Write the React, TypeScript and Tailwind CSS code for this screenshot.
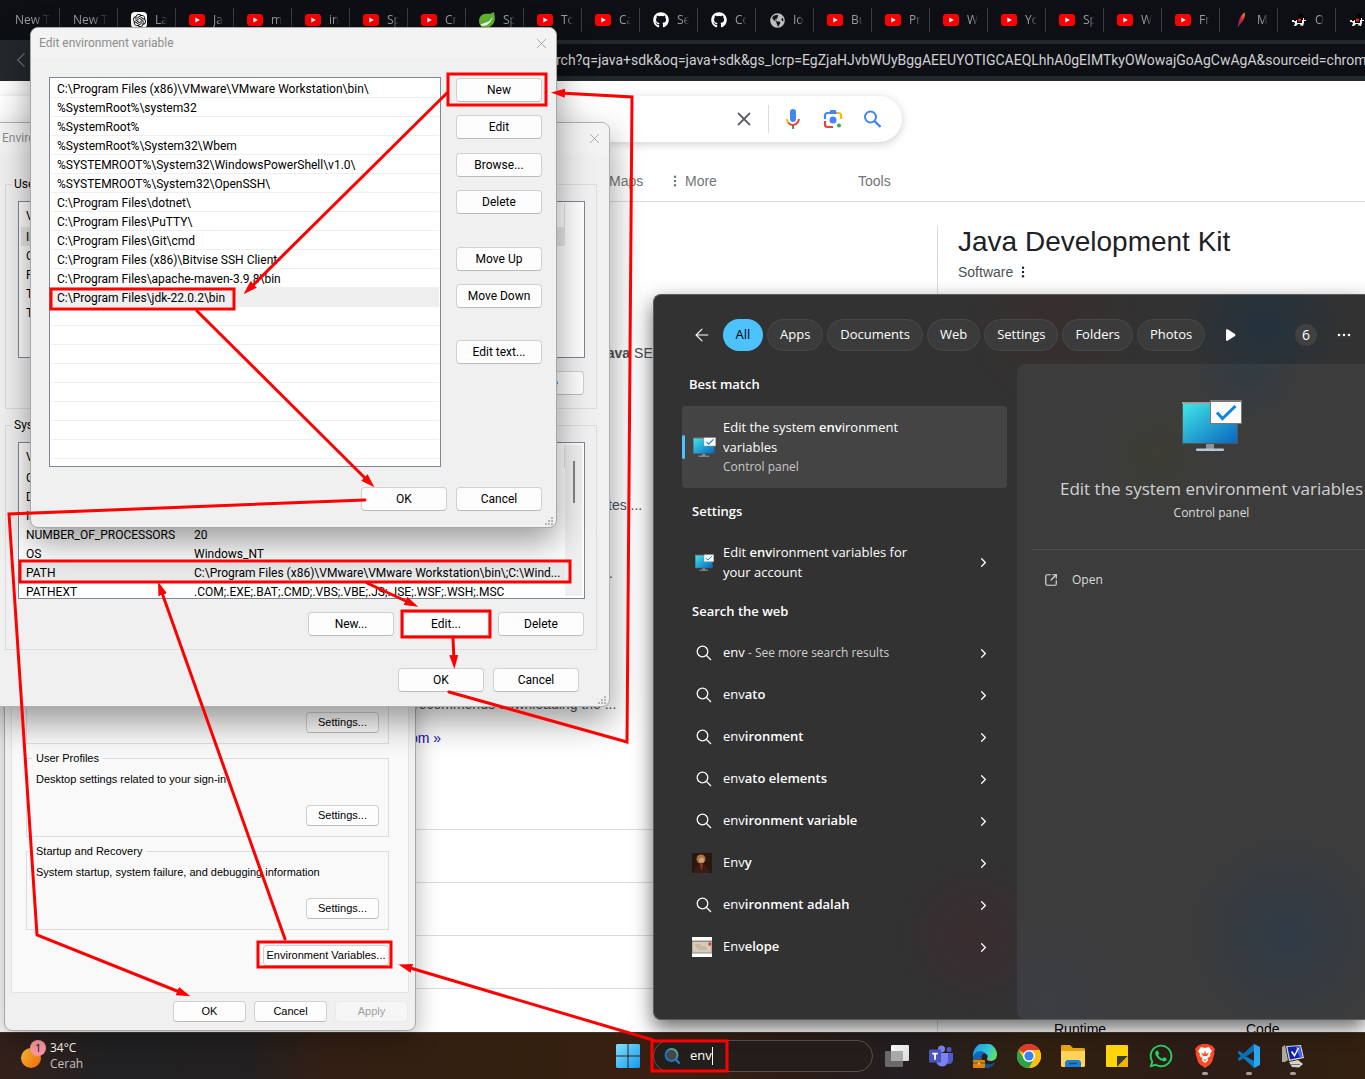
import type { ReactNode } from "react";
import { ChevronLeft, ChevronRight, X, ArrowLeft, SquareArrowOutUpRight } from "lucide-react";
import { FaGithub, FaWhatsapp, FaGlobeAmericas } from "react-icons/fa";
import { SiOpenai } from "react-icons/si";

/* ---------- icons ---------- */

function YouTubeIcon() {
  return (
    <svg viewBox="0 0 16 16" className="size-4">
      <rect x="0" y="2" width="16" height="12" rx="3" fill="#f00" />
      <path d="M6.3 5.4v5.2L10.8 8z" fill="#fff" />
    </svg>
  );
}

function SpringIcon() {
  return (
    <svg viewBox="0 0 16 16" className="size-4">
      <path d="M14.800 0c1 3.200 2 8-.6 11.700C11.500 15.800 6 17 2.200 14.500 0 12.500-.5 9 .5 6 1.700 2.800 4.800 1.500 8.400 1.700c2.900.2 5-.3 6.400-1.700z" fill="#5fb832" />
      <path d="M2.300 13.800c6 .6 10-3 11.400-9.500-2 4.500-4.500 6-10.700 7.500-1.500.5-1.500 1.800-.7 2z" fill="#fff" />
    </svg>
  );
}

function FeatherIcon() {
  return (
    <svg viewBox="0 0 16 16" className="size-4">
      <defs>
        <linearGradient id="feather" x1="0" y1="1" x2="1" y2="0">
          <stop offset="0" stopColor="#6d2a8c" />
          <stop offset=".5" stopColor="#d0203c" />
          <stop offset="1" stopColor="#f79a23" />
        </linearGradient>
      </defs>
      <path d="M4.600 14.800 5.500 11C6.500 6 8.500 2 11.800.4c.6 3.600-.9 8.200-5 12l-1.600 2.800z" fill="url(#feather)" />
    </svg>
  );
}

function DukeIcon() {
  return (
    <svg viewBox="0 0 16 16" className="size-4">
      <path d="M10 1 6 6l-4 2 1 2 7 1 3-3-1-5z" fill="#000" />
      <path d="M1 8h2v1h2V8h1v3h5V8h1V6h1v2h2v1h-2v2l-1 3h-2l-1-2H7l-2 2H3l1-3-1-1H1z" fill="#eee" />
      <circle cx="8.500" cy="8" r="1.800" fill="#e8251f" />
      <path d="M9 13h2v1H9z" fill="#27a84c" />
    </svg>
  );
}

function MonitorIcon({ className, id }: { className: string; id: string }) {
  return (
    <svg viewBox="0 0 60 52" className={className}>
      <defs>
        <linearGradient id={id} x1="0" y1="0" x2="1" y2="1">
          <stop offset="0" stopColor="#40e8e8" />
          <stop offset="1" stopColor="#0a63be" />
        </linearGradient>
      </defs>
      <rect x=".5" y="3.500" width="55" height="40" fill={`url(#${id})`} stroke="#555" />
      <path d="M0 3h56" stroke="#bbb" strokeWidth="1.500" />
      <path d="M24 44h8v5h-8z" fill="#8b929c" />
      <rect x="14" y="48.500" width="28" height="2.500" rx="1" fill="#bac7d2" />
      <rect x="28.500" y=".5" width="31" height="23" fill="#fafafa" stroke="#7a7775" />
      <path d="M28 1h32" stroke="#7a7775" strokeWidth="2" />
      <path d="m35 12.500 5.500 6L53.500 6" fill="none" stroke="#0f84dc" strokeWidth="3" />
    </svg>
  );
}

function MicIcon() {
  return (
    <svg viewBox="0 0 24 24" className="size-6">
      <rect x="9" y="2" width="6" height="13" rx="3" fill="#4285f4" />
      <path d="M11 18h2v4h-2z" fill="#34a853" />
      <path d="M6 12c0 1.700.6 3.200 1.700 4.300" fill="none" stroke="#fbbc04" strokeWidth="2" />
      <path d="M7.400 15.900C10 19 16.500 19 18 12" fill="none" stroke="#ea4335" strokeWidth="2" />
    </svg>
  );
}

function LensIcon() {
  return (
    <svg viewBox="0 0 24 24" className="size-6">
      <path d="M4 12V8.500A2.500 2.500 0 0 1 6.500 6h11" fill="none" stroke="#4285f4" strokeWidth="2.200" />
      <path d="M8 6l1.500-3h5L16 6z" fill="#4285f4" />
      <path d="M15.500 6h2A2.500 2.500 0 0 1 20 8.500V12" fill="none" stroke="#fbbc04" strokeWidth="2.200" />
      <path d="M4 14v3.500A2.500 2.500 0 0 0 6.500 20H12" fill="none" stroke="#ea4335" strokeWidth="2.200" />
      <circle cx="12" cy="13" r="3.500" fill="#4285f4" />
      <circle cx="18" cy="18.500" r="2" fill="#34a853" />
    </svg>
  );
}

function WindowsLogo() {
  return (
    <svg viewBox="0 0 24 24" className="size-6">
      <defs>
        <linearGradient id="win" x1="0" y1="0" x2="1" y2="1">
          <stop offset="0" stopColor="#7ee1ff" />
          <stop offset="1" stopColor="#1498f0" />
        </linearGradient>
      </defs>
      <path d="M1 0h10.500v11.500H0V1zM12.500 0H23l1 1v10.500H12.500zM0 12.500h11.500V24H1l-1-1zM12.500 12.500H24V23l-1 1H12.500z" fill="url(#win)" />
    </svg>
  );
}

function TaskViewIcon() {
  return (
    <svg viewBox="0 0 24 24" className="size-6">
      <defs>
        <linearGradient id="tv" x1="0" y1="0" x2="1" y2="1">
          <stop offset="0" stopColor="#fff" />
          <stop offset="1" stopColor="#d8d8d8" />
        </linearGradient>
      </defs>
      <rect x="6" y="1" width="18" height="16" rx="1" fill="url(#tv)" />
      <rect x="0" y="7" width="18" height="16" rx="1" fill="#696969" />
      <rect x="6" y="7" width="12" height="10" fill="#a9a9a9" />
    </svg>
  );
}

function TeamsIcon() {
  return (
    <svg viewBox="0 0 24 24" className="size-6">
      <circle cx="12.500" cy="5" r="3.500" fill="#7b83eb" />
      <circle cx="20" cy="5.500" r="2.500" fill="#5059c9" />
      <path d="M16 9h8v7a4 4 0 0 1-6 3.500z" fill="#5059c9" />
      <path d="M7 9h12v7a6 6 0 0 1-12 1z" fill="#7b83eb" />
      <rect x="0" y="5.500" width="12" height="13" rx="1" fill="#4b53bc" />
      <path d="M3.200 8.800h5.600v1.600H6.900v5.400H5.100v-5.400H3.200z" fill="#fff" />
    </svg>
  );
}

function EdgeIcon() {
  return (
    <svg viewBox="0 0 24 24" className="size-6">
      <defs>
        <linearGradient id="edge" x1="0" y1=".3" x2="1" y2=".6">
          <stop offset="0" stopColor="#1f9be8" />
          <stop offset=".6" stopColor="#35c6dc" />
          <stop offset="1" stopColor="#64e05c" />
        </linearGradient>
      </defs>
      <path d="M0 12a12 12 0 0 1 24-2c0 5-3 7-6.500 7-3 0-4.500-1.500-3-3.500C16 9 8 7 5 12z" fill="url(#edge)" />
      <path d="M0 13C1 7 9 6 12 9c-4 1-5 6-2 9s8 4 12 0C18 28-1 26 0 13z" fill="#0c68c0" />
      <path d="M10 11c-2.500 3-.5 8 4 9 3 .6 6 .2 8-1.500C20 22 16 24 12 24c-5-1-7-6-5-10z" fill="#114f94" />
      <rect x="0" y="16" width="12" height="8" rx="1" fill="#d9850f" />
      <path d="M4 16v-1.500h4V16M0 19h12" stroke="#8a4b05" fill="none" />
      <rect x="5" y="18.500" width="2" height="2" fill="#ffd257" />
    </svg>
  );
}

function ChromeIcon() {
  return (
    <svg viewBox="0 0 24 24" className="size-6">
      <circle cx="12" cy="12" r="12" fill="#fbc116" />
      <path d="M12 12 1.600 6A12 12 0 0 1 22.400 6z" fill="#e33b2e" />
      <path d="M1.600 6A12 12 0 0 0 12 24l5.200-9L12 12 6.800 15z" fill="#2ba24c" />
      <path d="M12 6h10.400a12 12 0 0 1-10.400 18l5.200-9z" fill="#fbc116" />
      <circle cx="12" cy="12" r="6" fill="#fff" />
      <circle cx="12" cy="12" r="4.600" fill="#3b82f0" />
    </svg>
  );
}

function FolderIcon() {
  return (
    <svg viewBox="0 0 24 24" className="size-6">
      <path d="M0 2.500C0 1.500.5 1 1.500 1H9l3 3h11l1 1v6H0z" fill="#e8a512" />
      <path d="M0 7h24v15l-1 1H1l-1-1z" fill="#ffd35c" />
      <path d="M4 23v-5l2-2h12l2 2v5z" fill="#1d7fd0" />
      <path d="M8 19.500h8" stroke="#0b4f8c" strokeWidth="1.500" />
    </svg>
  );
}

function NotesIcon() {
  return (
    <svg viewBox="0 0 24 24" className="size-6">
      <rect x="1" y="1" width="22" height="22" rx="1" fill="#ffd60a" />
      <path d="M12 23V12h11z" fill="#3a3a3a" />
      <path d="M12 23 23 12v11z" fill="#f2b200" />
    </svg>
  );
}

function BraveIcon() {
  return (
    <svg viewBox="0 0 24 24" className="size-6">
      <path d="m7 1 2-1h6l2 1 2 .5 3 3.500-1 3 .5 1.500L19 18l-2 2.500L12 24l-5-3.500L5 18 2.500 9.500 3 8 2 5l3-3.500z" fill="#fb4a25" />
      <path d="m12 4 4-1 3 4-2 3 .5 2-3 2 .5 2.500L12 19l-3-2.500.5-2.500-3-2 .5-2-2-3 3-4z" fill="#fff" />
      <path d="m12 6 1 4 3-1.500-2 3.500h-4L8 8.500 11 10zM10 15.500h4L12 17z" fill="#fb4a25" />
    </svg>
  );
}

function VsCodeIcon() {
  return (
    <svg viewBox="0 0 24 24" className="size-6">
      <path d="M17 0 6.500 10 2.500 7 1 7.800v1.400L17 24l1-6.500L8 12l10-5.500z" fill="#0b7bc4" />
      <path d="m1 15.500 1.500 1.500L18 6.500 17 0 1 14.500z" fill="#0a6eb4" />
      <path d="m17 0 6 3v18l-6 3z" fill="#2aa5f0" />
    </svg>
  );
}

function PcIcon() {
  return (
    <svg viewBox="0 0 24 24" className="size-6">
      <path d="m1 3 3-2 3 15-3 2H1z" fill="#a9a9a0" />
      <path d="M5 2 20 1l3 13-15 3z" fill="#d9d9d0" />
      <path d="m6.500 3 12.500-1 2.500 11-12.500 2.500z" fill="#1420a8" />
      <path d="m14.500 2.300 4.500-.3 2.500 11-3 .6z" fill="#4a66ee" />
      <path d="m10.500 7.500 3 4 4-7.500" stroke="#fff" strokeWidth="1.500" fill="none" />
      <path d="m8 18 9-2 5 4-4 3.500-7-.5z" fill="#d4d4ce" />
      <path d="M10 20.500h9" stroke="#777" />
    </svg>
  );
}

function Kebab({ className }: { className: string }) {
  return (
    <svg viewBox="0 0 4 14" className={className} fill="currentColor">
      <circle cx="2" cy="2" r="1.400" />
      <circle cx="2" cy="7" r="1.400" />
      <circle cx="2" cy="12" r="1.400" />
    </svg>
  );
}

function ResizeGrip() {
  return (
    <svg viewBox="0 0 9 9" className="absolute right-0.5 bottom-px size-[9px]" fill="#b5b5b5">
      <path d="M6 0h2v2H6zM6 3h2v2H6zM3 3h2v2H3zM6 6h2v2H6zM3 6h2v2H3zM0 6h2v2H0z" />
    </svg>
  );
}

/* ---------- browser ---------- */

type TabKind = "openai" | "youtube" | "spring" | "github" | "globe" | "feather" | "duke";

const tabs: { title: string; kind?: TabKind }[] = [
  { title: "New Tab" },
  { title: "New Tab" },
  { title: "La", kind: "openai" },
  { title: "Ja", kind: "youtube" },
  { title: "m", kind: "youtube" },
  { title: "in", kind: "youtube" },
  { title: "Sp", kind: "youtube" },
  { title: "Cr", kind: "youtube" },
  { title: "Sp", kind: "spring" },
  { title: "To", kind: "youtube" },
  { title: "Ca", kind: "youtube" },
  { title: "Se", kind: "github" },
  { title: "Co", kind: "github" },
  { title: "Io", kind: "globe" },
  { title: "Bu", kind: "youtube" },
  { title: "Pr", kind: "youtube" },
  { title: "W", kind: "youtube" },
  { title: "Yo", kind: "youtube" },
  { title: "Sp", kind: "youtube" },
  { title: "W", kind: "youtube" },
  { title: "Fr", kind: "youtube" },
  { title: "M", kind: "feather" },
  { title: "O", kind: "duke" },
  { title: "O", kind: "duke" },
];

function TabIcon({ kind }: { kind: TabKind }) {
  switch (kind) {
    case "openai":
      return (
        <span className="flex size-4 items-center justify-center rounded-sm bg-white text-black">
          <SiOpenai size={13} />
        </span>
      );
    case "youtube":
      return <YouTubeIcon />;
    case "spring":
      return <SpringIcon />;
    case "github":
      return <FaGithub size={16} color="#fff" />;
    case "globe":
      return <FaGlobeAmericas size={15} color="#bdbdbd" />;
    case "feather":
      return <FeatherIcon />;
    case "duke":
      return <DukeIcon />;
  }
}

function BrowserTab({ title, kind }: { title: string; kind?: TabKind }) {
  return (
    <button className="flex h-6 w-[58px] shrink-0 items-center gap-2 border-r border-[#3a3b40] pl-[13px] text-xs text-[#9a9b9f]">
      {kind && (
        <span className="flex w-4 shrink-0 justify-center">
          <TabIcon kind={kind} />
        </span>
      )}
      <span className="mr-2 overflow-hidden whitespace-nowrap [mask-image:linear-gradient(to_right,#000_50%,transparent)]">
        {title}
      </span>
    </button>
  );
}

function Browser() {
  return (
    <div className="flex min-h-0 flex-1 flex-col bg-white font-['Liberation_Sans',sans-serif] text-sm">
      <div className="flex h-10 shrink-0 items-center overflow-hidden bg-[#0e0f14] pl-0.5 font-['Open_Sans',sans-serif]">
        {tabs.map((tab, i) => (
          <BrowserTab key={i} {...tab} />
        ))}
      </div>
      <div className="flex h-[41px] shrink-0 items-center bg-[#22282c] py-1 pb-[5px]">
        <button aria-label="Back" className="pl-2 text-[#6b7074]">
          <ChevronLeft size={26} strokeWidth={1} />
        </button>
        <div className="ml-4 flex h-8 flex-1 items-center overflow-hidden bg-[#0e0f14] pl-[506px] font-['Roboto',sans-serif] text-sm whitespace-nowrap text-[#cfd0d2]">
          rch?q=java+sdk&amp;oq=java+sdk&amp;gs_lcrp=EgZjaHJvbWUyBggAEEUYOTIGCAEQLhhA0gEIMTkyOWowajGoAgCwAgA&amp;sourceid=chrome
        </div>
      </div>

      <div className="mt-[15px] flex h-[46px] w-[902px] shrink-0 items-center justify-end rounded-r-full bg-white pr-5 shadow-[0_2px_8px_rgba(60,64,67,0.25)]">
        <button aria-label="Clear" className="text-[#5f6368]">
          <X size={22} strokeWidth={2} />
        </button>
        <span className="mr-3 ml-[13px] h-7 w-px bg-[#dadce0]" />
        <button aria-label="Voice search">
          <MicIcon />
        </button>
        <button aria-label="Search by image" className="ml-4">
          <LensIcon />
        </button>
        <button aria-label="Search" className="ml-[18px] text-[#4285f4]">
          <svg viewBox="0 0 19 19" className="size-[19px]" fill="none" stroke="currentColor" strokeWidth="2">
            <circle cx="7.500" cy="7" r="5.500" />
            <path d="m11.500 11 6 6" strokeWidth="2.400" />
          </svg>
        </button>
      </div>

      <nav className="mt-6 flex h-9 shrink-0 border-b border-[#dadce0] pt-[3px] pl-[609px] text-[#70757a]">
        <a href="#maps" className="w-[63px] leading-6">Maps</a>
        <span className="flex h-6 w-[186px] items-center gap-[7px]">
          <Kebab className="h-3 w-1.5" />
          <a href="#more">More</a>
        </span>
        <a href="#tools" className="leading-6">Tools</a>
      </nav>

      <div className="flex min-h-0 flex-1 pt-6">
        <div className="w-[937px] shrink-0 overflow-hidden pl-[414px] leading-5 text-[#4d5156]">
          <p className="mt-[117px] pl-[185px]"><b>Java</b> SE</p>
          <p className="mt-[132px] pl-[194px]">tes ...</p>
          <p className="mt-12 pl-[195px]">.</p>
          <p className="mt-[111px]">recommends downloading the ...</p>
          <p className="-ml-1 mt-[14px] text-[#1a0dab]">om »</p>
          <ul className="mt-[81px]">
            {[0, 1, 2, 3].map((n) => (
              <li key={n} className="h-[53px] border-t border-[#dadce0]" />
            ))}
          </ul>
        </div>
        <aside className="flex-1 border-l border-[#dadce0] pl-5">
          <h2 className="text-[28px] leading-8 text-[#202124]">Java Development Kit</h2>
          <p className="mt-1 flex items-center gap-2 leading-5 text-[#4d5156]">
            Software <Kebab className="h-3 w-1 text-[#202124]" />
          </p>
          <div className="mt-[737px] flex pl-24 leading-5">
            <span className="w-48">Runtime</span>
            <span>Code</span>
          </div>
        </aside>
      </div>
    </div>
  );
}

/* ---------- dialogs ---------- */

function DialogButton({
  children,
  className = "",
  size = "h-6 w-[86px]",
  disabled = false,
}: {
  children: ReactNode;
  className?: string;
  size?: string;
  disabled?: boolean;
}) {
  const tone = disabled
    ? "border-[#ebebeb] bg-[#f6f6f6] text-[#a0a0a0]"
    : "border-[#d0d0d0] border-b-[#bcbcbc] bg-[#fdfdfd] text-black";
  return (
    <button disabled={disabled} className={`shrink-0 rounded border text-center ${size} ${tone} ${className}`}>
      {children}
    </button>
  );
}

function TitleBar({ title }: { title: string }) {
  return (
    <div className="flex h-[30px] shrink-0 items-center justify-between bg-[#f3f3f3] pr-1.5 pl-2 text-[#8c8c8c]">
      <span>{title}</span>
      <button aria-label="Close">
        <X size={17} strokeWidth={1} />
      </button>
    </div>
  );
}

function PropertyGroup({ title, text }: { title: string; text: string }) {
  return (
    <fieldset className="mt-2 h-[85px] shrink-0 border border-[#dcdcdc] px-[9px]">
      <legend className="-ml-1 bg-[#f9f9f9] px-1 leading-[13px]">{title}</legend>
      <p className="mt-1.5 leading-4 whitespace-nowrap">{text}</p>
      <div className="mt-[18px] flex justify-end">
        <DialogButton size="h-[21px] w-[73px]">Settings...</DialogButton>
      </div>
    </fieldset>
  );
}

function SystemProperties() {
  return (
    <section className="absolute top-[560px] left-1 flex h-[471px] w-[412px] flex-col rounded-lg border border-[#a8a8a8] bg-[#f0f0f0] px-1.5 pb-2 font-['Liberation_Sans',sans-serif] text-[11px] text-black shadow-[0_8px_24px_rgba(0,0,0,0.3)]">
      <div className="flex flex-1 flex-col justify-end border border-t-0 border-[#e3e3e3] bg-[#f9f9f9] pr-[19px] pb-[26px] pl-3.5">
        <PropertyGroup title="Performance" text="Visual effects, processor scheduling, memory usage" />
        <PropertyGroup title="User Profiles" text="Desktop settings related to your sign-in" />
        <PropertyGroup title="Startup and Recovery" text="System startup, system failure, and debugging information" />
        <DialogButton size="h-[21px] w-[126px]" className="mt-[15px] self-end">Environment Variables...</DialogButton>
      </div>
      <div className="mt-2 flex justify-end gap-2 pr-px">
        <DialogButton size="h-[21px] w-[73px]">OK</DialogButton>
        <DialogButton size="h-[21px] w-[73px]">Cancel</DialogButton>
        <DialogButton size="h-[21px] w-[73px]" disabled>Apply</DialogButton>
      </div>
    </section>
  );
}

const userVariables = [
  ["IntelliJ IDEA", ""],
  ["OneDrive", ""],
  ["Path", ""],
  ["TEMP", ""],
  ["TMP", ""],
];

const systemVariables = [
  ["ComSpec", "C:\\Windows\\system32\\cmd.exe"],
  ["DriverData", "C:\\Windows\\System32\\Drivers\\DriverData"],
  ["IntelliJ IDEA", ""],
  ["NUMBER_OF_PROCESSORS", "20"],
  ["OS", "Windows_NT"],
  ["PATH", "C:\\Program Files (x86)\\VMware\\VMware Workstation\\bin\\;C:\\Wind..."],
  ["PATHEXT", ".COM;.EXE;.BAT;.CMD;.VBS;.VBE;.JS;.JSE;.WSF;.WSH;.MSC"],
];

function VariableGroup({
  title,
  rows,
  selected,
  scroll,
}: {
  title: string;
  rows: string[][];
  selected: string;
  scroll?: boolean;
}) {
  return (
    <fieldset className="h-[233px] shrink-0 border border-[#dcdcdc] px-3">
      <legend className="-ml-1.5 px-0.5 leading-4">{title}</legend>
      <div className="-mr-px mt-[9px] flex h-[157px] overflow-hidden border border-[#7f8694] bg-white p-0.5">
        <div className="flex-1">
          <table className="w-full table-fixed border-collapse text-left">
            <thead>
              <tr className="h-[23px]">
                <th className="w-[168px] pl-[5px] font-normal">Variable</th>
                <th className="border-r border-[#e0e0e0] pl-[5px] font-normal">Value</th>
              </tr>
            </thead>
            <tbody>
              {rows.map(([name, value]) => (
                <tr key={name} className={name === selected ? "h-[19px] bg-[#e9e9e9]" : "h-[19px]"}>
                  <td className="p-0 pt-px pl-[5px] leading-[18px] whitespace-nowrap">{name}</td>
                  <td className="p-0 pt-px pl-[5px] leading-[18px] whitespace-nowrap">{value}</td>
                </tr>
              ))}
            </tbody>
          </table>
        </div>
        <div className={scroll ? "w-[17px] bg-[#f0f0f0] pt-4 pl-2" : "w-[17px]"}>
          {scroll && <div className="h-[42px] w-0.5 bg-[#858585]" />}
        </div>
      </div>
      <div className="mt-[13px] flex justify-end gap-[9px]">
        <DialogButton>New...</DialogButton>
        <DialogButton>Edit...</DialogButton>
        <DialogButton>Delete</DialogButton>
      </div>
    </fieldset>
  );
}

function EnvironmentVariables() {
  return (
    <section className="absolute top-[122px] -left-[7px] flex h-[585px] w-[617px] flex-col overflow-hidden rounded-lg border border-[#b0b0b0] bg-[#f0f0f0] font-['Roboto',sans-serif] text-xs text-black shadow-[0_14px_34px_rgba(0,0,0,0.4)]">
      <TitleBar title="Environment Variables" />
      <div className="flex flex-1 flex-col pt-[23px] pr-3 pl-[11px]">
        <VariableGroup title="User variables" rows={userVariables} selected="IntelliJ IDEA" />
        <div className="h-2 shrink-0" />
        <VariableGroup title="System variables" rows={systemVariables} selected="PATH" scroll />
        <div className="mt-[18px] flex justify-end gap-[9px] pr-[18px]">
          <DialogButton>OK</DialogButton>
          <DialogButton>Cancel</DialogButton>
        </div>
      </div>
      <ResizeGrip />
    </section>
  );
}

const paths = [
  "C:\\Program Files (x86)\\VMware\\VMware Workstation\\bin\\",
  "%SystemRoot%\\system32",
  "%SystemRoot%",
  "%SystemRoot%\\System32\\Wbem",
  "%SYSTEMROOT%\\System32\\WindowsPowerShell\\v1.0\\",
  "%SYSTEMROOT%\\System32\\OpenSSH\\",
  "C:\\Program Files\\dotnet\\",
  "C:\\Program Files\\PuTTY\\",
  "C:\\Program Files\\Git\\cmd",
  "C:\\Program Files (x86)\\Bitvise SSH Client",
  "C:\\Program Files\\apache-maven-3.9.8\\bin",
  "C:\\Program Files\\jdk-22.0.2\\bin",
  "", "", "", "", "", "", "", "",
];

function EditVariable() {
  return (
    <section className="absolute top-[27px] left-[30px] flex h-[501px] w-[527px] flex-col overflow-hidden rounded-lg border border-[#a8a8a8] bg-[#f0f0f0] font-['Roboto',sans-serif] text-xs text-black shadow-[0_14px_34px_rgba(0,0,0,0.4)]">
      <TitleBar title="Edit environment variable" />
      <div className="flex justify-between pt-[19px] pr-[14px] pl-[18px]">
        <ul className="h-[390px] w-[392px] border border-[#7f8694] bg-white p-px">
          {paths.map((path, i) => (
            <li
              key={i}
              className={`h-[19px] border-b border-[#efefef] pt-px pl-1.5 leading-[19px] whitespace-nowrap ${
                i === 11 ? "bg-[#efefef]" : ""
              }`}
            >
              {path}
            </li>
          ))}
        </ul>
        <div className="flex flex-col gap-[13px] pt-px">
          <DialogButton>New</DialogButton>
          <DialogButton>Edit</DialogButton>
          <DialogButton className="mt-px">Browse...</DialogButton>
          <DialogButton>Delete</DialogButton>
          <DialogButton className="mt-5">Move Up</DialogButton>
          <DialogButton>Move Down</DialogButton>
          <DialogButton className="mt-[19px]">Edit text...</DialogButton>
        </div>
      </div>
      <div className="mt-5 flex justify-end gap-[9px] pr-[14px]">
        <DialogButton>OK</DialogButton>
        <DialogButton>Cancel</DialogButton>
      </div>
      <ResizeGrip />
    </section>
  );
}

/* ---------- start menu search ---------- */

const filters = ["Apps", "Documents", "Web", "Settings", "Folders", "Photos"];

const suggestions: { head: string; tail: string; note?: string; picture?: "portrait" | "letter" }[] = [
  { head: "env", tail: "", note: " - See more search results" },
  { head: "env", tail: "ato" },
  { head: "env", tail: "ironment" },
  { head: "env", tail: "ato elements" },
  { head: "env", tail: "ironment variable" },
  { head: "Env", tail: "y", picture: "portrait" },
  { head: "env", tail: "ironment adalah" },
  { head: "Env", tail: "elope", picture: "letter" },
];

function Portrait() {
  return (
    <svg viewBox="0 0 20 20" className="size-5">
      <path d="M0 0h20v20H0z" fill="#2a1710" />
      <circle cx="9" cy="6" r="4.500" fill="#a6754a" />
      <circle cx="9.500" cy="7" r="2.600" fill="#d6a06a" />
      <path d="M2 20c1-6 4-9 7-9s7 3 8 9z" fill="#3c1d14" />
      <path d="M8 11h3l-1 6H9z" fill="#8a3220" />
    </svg>
  );
}

function Letter() {
  return (
    <svg viewBox="0 0 20 20" className="size-5">
      <path d="M0 0h20v20H0z" fill="#fff" />
      <path d="M0 3.500h20v13H0z" fill="#8f8c88" />
      <path d="M.5 5h19v10.500H.5z" fill="#d9cbb4" />
      <path d="M4 10h10M6 12h9M3 8h6" stroke="#a89a86" strokeWidth=".7" />
      <path d="M16.500 5.500h2.500v3h-2.500z" fill="#b8433c" />
    </svg>
  );
}

function Magnifier() {
  return (
    <svg viewBox="0 0 16 16" className="ml-1 size-4" fill="none" stroke="currentColor" strokeWidth="1.300">
      <circle cx="6.500" cy="6.500" r="5.300" />
      <path d="m10.500 10.500 4.500 4.500" />
    </svg>
  );
}

function SearchPanel() {
  return (
    <section className="absolute top-[294px] right-0 left-[653px] flex h-[726px] flex-col overflow-hidden rounded-l-lg border border-r-0 border-[#5c5c5c] bg-[#323232] bg-[radial-gradient(circle_at_320px_640px,rgba(75,35,45,0.35),transparent_80px),radial-gradient(circle_at_610px_30px,rgba(25,50,70,0.6),transparent_80px),radial-gradient(circle_at_400px_30px,rgba(75,35,35,0.25),transparent_90px)] font-['Open_Sans',sans-serif] text-[13px] text-white shadow-[0_8px_20px_rgba(0,0,0,0.6)]">
      <div className="flex h-[69px] shrink-0 items-center gap-1 pt-2.5 pl-[38px]">
        <button aria-label="Back" className="mr-[7px]">
          <ArrowLeft size={20} strokeWidth={1.300} />
        </button>
        <button className="h-8 w-10 rounded-full bg-[#4cc2ff] text-black">All</button>
        {filters.map((name) => (
          <button key={name} className="h-8 rounded-full border border-[#484848] bg-[#3b3b3b] px-3">
            {name}
          </button>
        ))}
        <button aria-label="More filters" className="ml-[17px]">
          <svg viewBox="0 0 10 12" className="h-3 w-2.5" fill="#fff">
            <path d="M0 1c0-1 1-1 2-.5L9 5q1 1 0 2l-7 4.500c-1 .5-2 .5-2-.5z" />
          </svg>
        </button>
        <span className="ml-auto flex size-[22px] items-center justify-center rounded-full bg-[#414141] text-sm">6</span>
        <button aria-label="Options" className="mr-3.5 ml-4">
          <svg viewBox="0 0 14 4" className="h-1 w-3.5" fill="#fff">
            <circle cx="2" cy="2" r="1.300" />
            <circle cx="7" cy="2" r="1.300" />
            <circle cx="12" cy="2" r="1.300" />
          </svg>
        </button>
      </div>
      <div className="flex min-h-0 flex-1">
        <div className="w-[363px] shrink-0 pr-2.5 pl-7">
          <h3 className="mt-[10px] pl-[7px] leading-5 font-semibold">Best match</h3>
          <button className="mt-3 flex h-[82px] w-full items-center rounded bg-[#444] text-left">
            <span className="h-6 w-[3px] rounded-full bg-[#4cc2ff]" />
            <MonitorIcon id="monitor-best" className="mr-[7px] ml-2 h-5 w-[23px]" />
            <span className="w-[200px] leading-5">
              Edit the system <b className="font-semibold">env</b>ironment variables
              <span className="block text-xs leading-5 text-[#c8c8c8]">Control panel</span>
            </span>
          </button>
          <h3 className="mt-[13px] pl-[10px] leading-5 font-semibold">Settings</h3>
          <button className="mt-4 flex h-[50px] w-full items-center pr-4 text-left">
            <MonitorIcon id="monitor-settings" className="mr-[9px] ml-[13px] h-[17px] w-[19px]" />
            <span className="w-[210px] leading-5">
              Edit <b className="font-semibold">env</b>ironment variables for your account
            </span>
            <ChevronRight size={15} strokeWidth={2} className="ml-auto" />
          </button>
          <h3 className="mt-[14px] mb-[11px] pl-[10px] leading-5 font-semibold">Search the web</h3>
          {suggestions.map((s) => (
            <button key={s.head + s.tail} className="flex h-[42px] w-full items-center pr-4 pl-[10px] text-left">
              <span className="flex w-[31px] items-center">
                {s.picture === "portrait" && <Portrait />}
                {s.picture === "letter" && <Letter />}
                {!s.picture && <Magnifier />}
              </span>
              <span>
                {s.head}
                <b className="font-semibold">{s.tail}</b>
                {s.note && <span className="text-xs text-[#cfcfcf]">{s.note}</span>}
              </span>
              <ChevronRight size={15} strokeWidth={2} className="ml-auto" />
            </button>
          ))}
        </div>
        <div className="flex min-w-0 flex-1 flex-col rounded-l-lg bg-[#3c3c3c] bg-[radial-gradient(circle_at_140px_90px,rgba(62,62,45,0.5),transparent_60px),radial-gradient(circle_at_230px_0px,rgba(45,60,72,0.7),transparent_60px),radial-gradient(circle_at_270px_570px,rgba(40,58,78,0.6),transparent_100px),radial-gradient(circle_at_30px_640px,rgba(60,62,72,0.6),transparent_100px)] pl-[15px]">
          <div className="-mr-[26px] flex flex-col items-center border-b border-[#4e4e4e] pt-9 pb-[26px]">
            <MonitorIcon id="monitor-preview" className="h-[52px] w-[60px]" />
            <p className="mt-[23px] text-[17px] leading-7 whitespace-nowrap text-[#d2d2d2]">Edit the system environment variables</p>
            <p className="text-xs leading-5 text-[#dcdcdc]">Control panel</p>
          </div>
          <button className="mt-5 flex items-center gap-[14px] self-start pl-3 text-xs leading-5 text-[#dcdcdc]">
            <SquareArrowOutUpRight size={14} strokeWidth={2} />
            Open
          </button>
        </div>
      </div>
    </section>
  );
}

/* ---------- taskbar ---------- */

const apps: { name: string; icon: ReactNode; running?: boolean }[] = [
  { name: "Task view", icon: <TaskViewIcon /> },
  { name: "Teams", icon: <TeamsIcon /> },
  { name: "Edge", icon: <EdgeIcon /> },
  { name: "Chrome", icon: <ChromeIcon /> },
  { name: "File Explorer", icon: <FolderIcon /> },
  { name: "Sticky Notes", icon: <NotesIcon /> },
  { name: "WhatsApp", icon: <FaWhatsapp size={26} color="#25d366" /> },
  { name: "Brave", icon: <BraveIcon />, running: true },
  { name: "VS Code", icon: <VsCodeIcon />, running: true },
  { name: "System Properties", icon: <PcIcon />, running: true },
];

function Taskbar() {
  return (
    <footer className="relative flex h-[47px] shrink-0 items-center border-t border-[#3d3732] bg-[linear-gradient(to_right,#34201a,#212123_8%,#232021_18%,#331f14_24%,#33200f_38%,#3b1f12_50%,#2c1c16_58%,#231e22_66%,#31200f_76%,#2b1c17_88%,#33200f)] font-['Open_Sans',sans-serif] text-xs text-white">
      <div className="flex w-[606px] shrink-0 items-center gap-1 pl-5">
        <svg viewBox="0 0 26 28" className="mb-1 h-7 w-[26px]">
          <defs>
            <linearGradient id="sun" x1="0" y1="0" x2="1" y2="1">
              <stop offset="0" stopColor="#f7bf2d" />
              <stop offset="1" stopColor="#f1660f" />
            </linearGradient>
          </defs>
          <circle cx="11" cy="18" r="10" fill="url(#sun)" />
          <circle cx="18" cy="8" r="8" fill="#ff99a4" />
          <text x="15" y="12" fontSize="11" fill="#111">1</text>
        </svg>
        <p className="leading-4">
          34°C
          <span className="block text-[#c9c4c0]">Cerah</span>
        </p>
      </div>
      <button aria-label="Start" className="flex w-11 justify-center">
        <WindowsLogo />
      </button>
      <label className="ml-[3px] flex h-8 w-[220px] shrink-0 items-center rounded-full border border-[#5a504b] bg-[#231e1b] pl-2.5 text-[13px]">
        <svg viewBox="0 0 16 16" className="size-4">
          <defs>
            <linearGradient id="find" x1="1" y1="0" x2="0" y2="1">
              <stop offset="0" stopColor="#5ec48a" />
              <stop offset=".6" stopColor="#1a78cc" />
            </linearGradient>
          </defs>
          <circle cx="7.500" cy="7" r="6" fill="#464646" stroke="url(#find)" strokeWidth="1.800" />
          <path d="m12 11.500 3 3.500" stroke="#1a86d9" strokeWidth="2" strokeLinecap="round" />
        </svg>
        <input aria-label="Search" defaultValue="env" className="ml-2.5 w-6 bg-transparent outline-none" />
        <span className="-ml-0.5 h-[18px] w-px bg-white" />
      </label>
      <div className="ml-0.5 flex shrink-0">
        {apps.map((app) => (
          <button key={app.name} aria-label={app.name} className="relative flex h-[46px] w-11 items-center justify-center">
            {app.icon}
            {app.running && <span className="absolute bottom-1 h-[3px] w-1.5 rounded-full bg-[#a89e98]" />}
          </button>
        ))}
      </div>
    </footer>
  );
}

/* ---------- tutorial annotations ---------- */

const arrows = [
  "M447 93 250 288",
  "M197 311 368 481",
  "M365 500 9 514 37 935 182 993",
  "M285 939 161 590",
  "M367 583 410 603",
  "M453 639 454 660",
  "M449 692 627 742 632 97 560 93",
  "M653 1040 407 967",
];

const boxes = [
  [448, 74, 98, 31],
  [51, 289, 183, 20],
  [20, 561, 550, 21],
  [402, 611, 88, 26],
  [258, 942, 133, 25],
  [652, 1041, 75, 30],
];

function Annotations() {
  return (
    <svg className="pointer-events-none absolute inset-0 size-full" fill="none" stroke="#f00" strokeWidth="3">
      <defs>
        <marker id="head" viewBox="0 0 14 10" refX="5" refY="5" markerWidth="14" markerHeight="10" markerUnits="userSpaceOnUse" orient="auto">
          <path d="M0 .5 14 5 0 9.500z" fill="#f00" stroke="none" />
        </marker>
      </defs>
      {arrows.map((d) => (
        <path key={d} d={d} markerEnd="url(#head)" strokeLinecap="round" />
      ))}
      {boxes.map(([x, y, width, height]) => (
        <rect key={`${x}-${y}`} x={x} y={y} width={width} height={height} />
      ))}
    </svg>
  );
}

export default function App() {
  return (
    <main className="relative flex h-screen flex-col overflow-hidden">
      <Browser />
      <Taskbar />
      <SystemProperties />
      <EnvironmentVariables />
      <EditVariable />
      <SearchPanel />
      <Annotations />
    </main>
  );
}
